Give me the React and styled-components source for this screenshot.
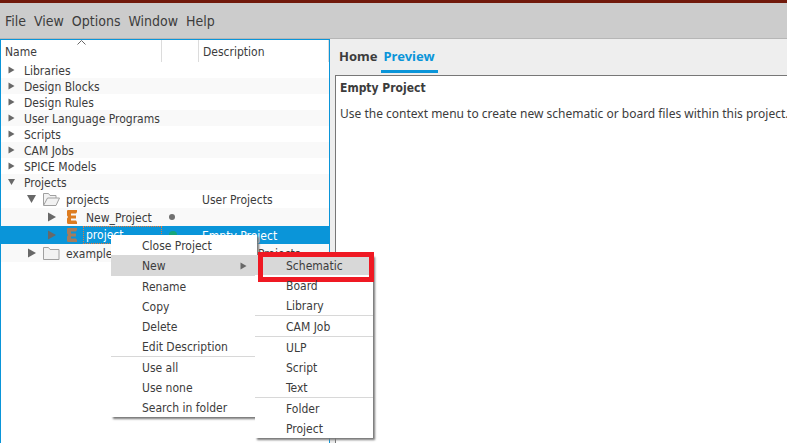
import React from "react";
import styled, { createGlobalStyle, css } from "styled-components";

const BLUE = "#0a95d9";
const FONT = `"DejaVu Sans Condensed", "Noto Sans", sans-serif`;

const Global = createGlobalStyle`
  *, *::before, *::after { box-sizing: border-box; }
  body { margin: 0; overflow: hidden; background: #fff; }
  button { font: inherit; color: inherit; border: 0; padding: 0; background: none; }
`;

const Window = styled.div`
  position: relative;
  display: flex;
  flex-direction: column;
  min-height: 100vh;
  border-top: 3px solid #71190b;
  font: 12px/16px ${FONT};
  color: #3c3c3c;
`;

const MenuBar = styled.nav`
  display: flex;
  align-items: center;
  gap: 8px;
  height: 36px;
  padding-left: 5px;
  background: #ccc;
  border-bottom: 1px solid #b6b6b6;
  font-size: 14px;
`;

const Panes = styled.main`
  flex: 1;
  display: flex;
  background: #eee;
`;

const TreePane = styled.section`
  flex: 0 0 330px;
  background: #fff;
  border: 1px solid ${BLUE};
  border-bottom: 0;
`;

const Tree = styled.table`
  width: 100%;
  table-layout: fixed;
  border-collapse: separate;
  border-spacing: 0;
`;

const Heading = styled.th`
  position: relative;
  width: ${(p) => p.$width || "auto"};
  height: 22px;
  padding: 2px 4px 0;
  text-align: left;
  font-weight: 400;
  border-right: 1px solid #dcdcdc;
`;

const SortMark = styled.svg`
  position: absolute;
  top: 0;
  right: 75px;
`;

const Row = styled.tr`
  height: ${(p) => (p.$nested ? "18px" : "16px")};
  &:nth-child(even) { background: #f9f9f9; }
  ${(p) => p.$selected && css`
    && { background: ${BLUE}; color: #fff; }
  `}
`;

const Cell = styled.td`
  padding: 0 0 0 ${(p) => p.$pad || "3px"};
  white-space: nowrap;
`;

const About = styled(Cell)`
  padding-top: 2px;
  line-height: 14px;
`;

const Node = styled.div`
  display: flex;
  align-items: center;
  padding-left: ${(p) => p.$level * 20}px;
`;

const Toggle = styled.button`
  display: flex;
  width: 20px;
  margin-right: ${(p) => (p.$nested ? "-1px" : "0")};
`;

const IconSlot = styled.span`
  display: flex;
  width: 23px;
`;

const Label = styled.span`
  flex: 1;
  line-height: ${(p) => (p.$focused ? "17px" : "18px")};
  height: ${(p) => (p.$focused ? "18px" : "16px")};
  ${(p) => p.$focused && css`
    margin-left: -3px;
    padding-left: 2px;
    border: 1px dotted #e8793a;
  `}
`;

const Dot = styled.span`
  display: block;
  width: ${(p) => (p.$active ? "8px" : "6px")};
  height: ${(p) => (p.$active ? "8px" : "6px")};
  border-radius: 50%;
  background: ${(p) => (p.$active ? "#16a67b" : "#707070")};
`;

const Detail = styled.section`
  flex: 1;
  min-width: 0;
  display: flex;
  flex-direction: column;
  padding-left: 5px;
  font-family: "Noto Sans", sans-serif;
`;

const Tabs = styled.div`
  display: flex;
  height: 36px;
  padding: 3px 0 2px 1px;
`;

const Tab = styled.button`
  padding: 0 3px;
  font-size: 13px;
  font-weight: 700;
  border-bottom: 3px solid transparent;
  ${(p) => p.$active && css`
    color: ${BLUE};
    border-color: ${BLUE};
  `}
`;

const Preview = styled.article`
  flex: 1;
  padding: 4px;
  background: #fff;
  border: solid #777;
  border-width: 1px 0 0 1px;
  white-space: nowrap;
`;

const Title = styled.h1`
  margin: 0 0 10px;
  font: 700 12px/16px ${FONT};
`;

const Text = styled.p`
  margin: 0;
`;

const Menu = styled.div`
  position: absolute;
  left: ${(p) => p.$left};
  top: ${(p) => p.$top};
  width: ${(p) => p.$width};
  background: #fff;
  box-shadow: 2px 2px 2px #777;
  clip-path: inset(-4px -5px -5px 0);
`;

const MenuItem = styled.button`
  position: relative;
  display: flex;
  align-items: center;
  justify-content: space-between;
  width: 100%;
  height: 20px;
  padding: 2px 7px 0 31px;
  ${(p) => p.$current && css`background: #d8d8d8;`}
`;

const Rule = styled.hr`
  height: 1px;
  margin: 0;
  border: 0;
  background: #d8d8d8;
`;

const Highlight = styled.span`
  position: absolute;
  inset: -3px -1px -7px 3px;
  border: 5px solid #ef1923;
`;

const Arrow = ({ open, big }) => (
  <svg width="14" height="12" viewBox="0 0 14 12" aria-hidden="true">
    <path
      fill="#686868"
      d={open ? (big ? "M3 2h9L7.500 10z" : "M4 3h7L7.500 9z") : big ? "M4 1.500v9l8-4.500z" : "M4.500 2.500v7l6-3.500z"}
    />
  </svg>
);

const Folder = ({ open }) => (
  <svg width="17" height="14" viewBox="0 0 17 14" fill="#f2f2f2" stroke="#a0a0a0" aria-hidden="true">
    {open ? (
      <path d="M.5 13V1.500h5l1.500 2h6v2.500M.5 13.500 4.500 6h12l-3.500 7.500z" />
    ) : (
      <path d="M.5 13.500v-12h5l1.500 2h9v10z" />
    )}
  </svg>
);

const ProjectMark = ({ dim }) => (
  <svg width="17" height="14" viewBox="0 0 17 14" aria-hidden="true">
    <path
      fill={dim ? "#a57c5c" : "#dd7c20"}
      d="M4 1Q4 0 5 0H14V2L13 3.500H8V5.500H13V8.500H8V10.500H13L14 12V14H5.500Q4 14 4 12.500V8.500L5 7 4 5.500z"
    />
  </svg>
);

const nodes = [
  { name: "Libraries" },
  { name: "Design Blocks" },
  { name: "Design Rules" },
  { name: "User Language Programs" },
  { name: "Scripts" },
  { name: "CAM Jobs" },
  { name: "SPICE Models" },
  { name: "Projects", open: true },
  { name: "projects", open: true, level: 1, icon: <Folder open />, about: "User Projects" },
  { name: "New_Project", level: 2, icon: <ProjectMark />, dot: true },
  { name: "project", level: 2, icon: <ProjectMark dim />, dot: true, selected: true, about: "Empty Project" },
  { name: "examples", level: 1, icon: <Folder />, about: "Examples Projects" },
];

const contextItems = ["Close Project", "New", null, "Rename", "Copy", "Delete", "Edit Description", null, "Use all", "Use none", "Search in folder"];
const newItems = ["Schematic", "Board", "Library", null, "CAM Job", null, "ULP", "Script", "Text", null, "Folder", "Project"];

function PopupMenu({ label, items, current, submenu, ...place }) {
  return (
    <Menu role="menu" aria-label={label} {...place}>
      {items.map((item, i) =>
        item === null ? (
          <Rule key={i} />
        ) : (
          <MenuItem key={item} role="menuitem" $current={item === current}>
            {item}
            {item === current && (submenu ? <Arrow /> : <Highlight />)}
          </MenuItem>
        )
      )}
    </Menu>
  );
}

export default function App() {
  return (
    <Window>
      <Global />
      <MenuBar>
        {["File", "View", "Options", "Window", "Help"].map((m) => (
          <button key={m}>{m}</button>
        ))}
      </MenuBar>
      <Panes>
        <TreePane>
          <Tree>
            <thead>
              <tr>
                <Heading $width="161px">
                  Name
                  <SortMark width="9" height="5" viewBox="0 0 9 5" fill="none" stroke="#666" aria-hidden="true">
                    <path d="M.5 4.500l4-4 4 4" />
                  </SortMark>
                </Heading>
                <Heading $width="37px" aria-label="Status" />
                <Heading>Description</Heading>
              </tr>
            </thead>
            <tbody>
              {nodes.map(({ name, open, level = 0, icon, dot, selected, about }) => (
                <Row key={name} $nested={level > 0} $selected={selected}>
                  <Cell>
                    <Node $level={level}>
                      <Toggle $nested={level > 0} aria-label={`Toggle ${name}`} aria-expanded={!!open}>
                        <Arrow open={open} big={level > 0} />
                      </Toggle>
                      {icon && <IconSlot>{icon}</IconSlot>}
                      <Label $focused={selected}>{name}</Label>
                    </Node>
                  </Cell>
                  <Cell $pad="7px">{dot && <Dot $active={selected} />}</Cell>
                  <About>{about}</About>
                </Row>
              ))}
            </tbody>
          </Tree>
        </TreePane>
        <Detail>
          <Tabs role="tablist">
            <Tab role="tab">Home</Tab>
            <Tab role="tab" $active aria-selected="true">Preview</Tab>
          </Tabs>
          <Preview>
            <Title>Empty Project</Title>
            <Text>Use the context menu to create new schematic or board files within this project.</Text>
          </Preview>
        </Detail>
      </Panes>
      <PopupMenu label="Project" items={contextItems} current="New" submenu $left="111px" $top="232px" $width="146px" />
      <PopupMenu label="New" items={newItems} current="Schematic" $left="255px" $top="252px" $width="118px" />
    </Window>
  );
}
